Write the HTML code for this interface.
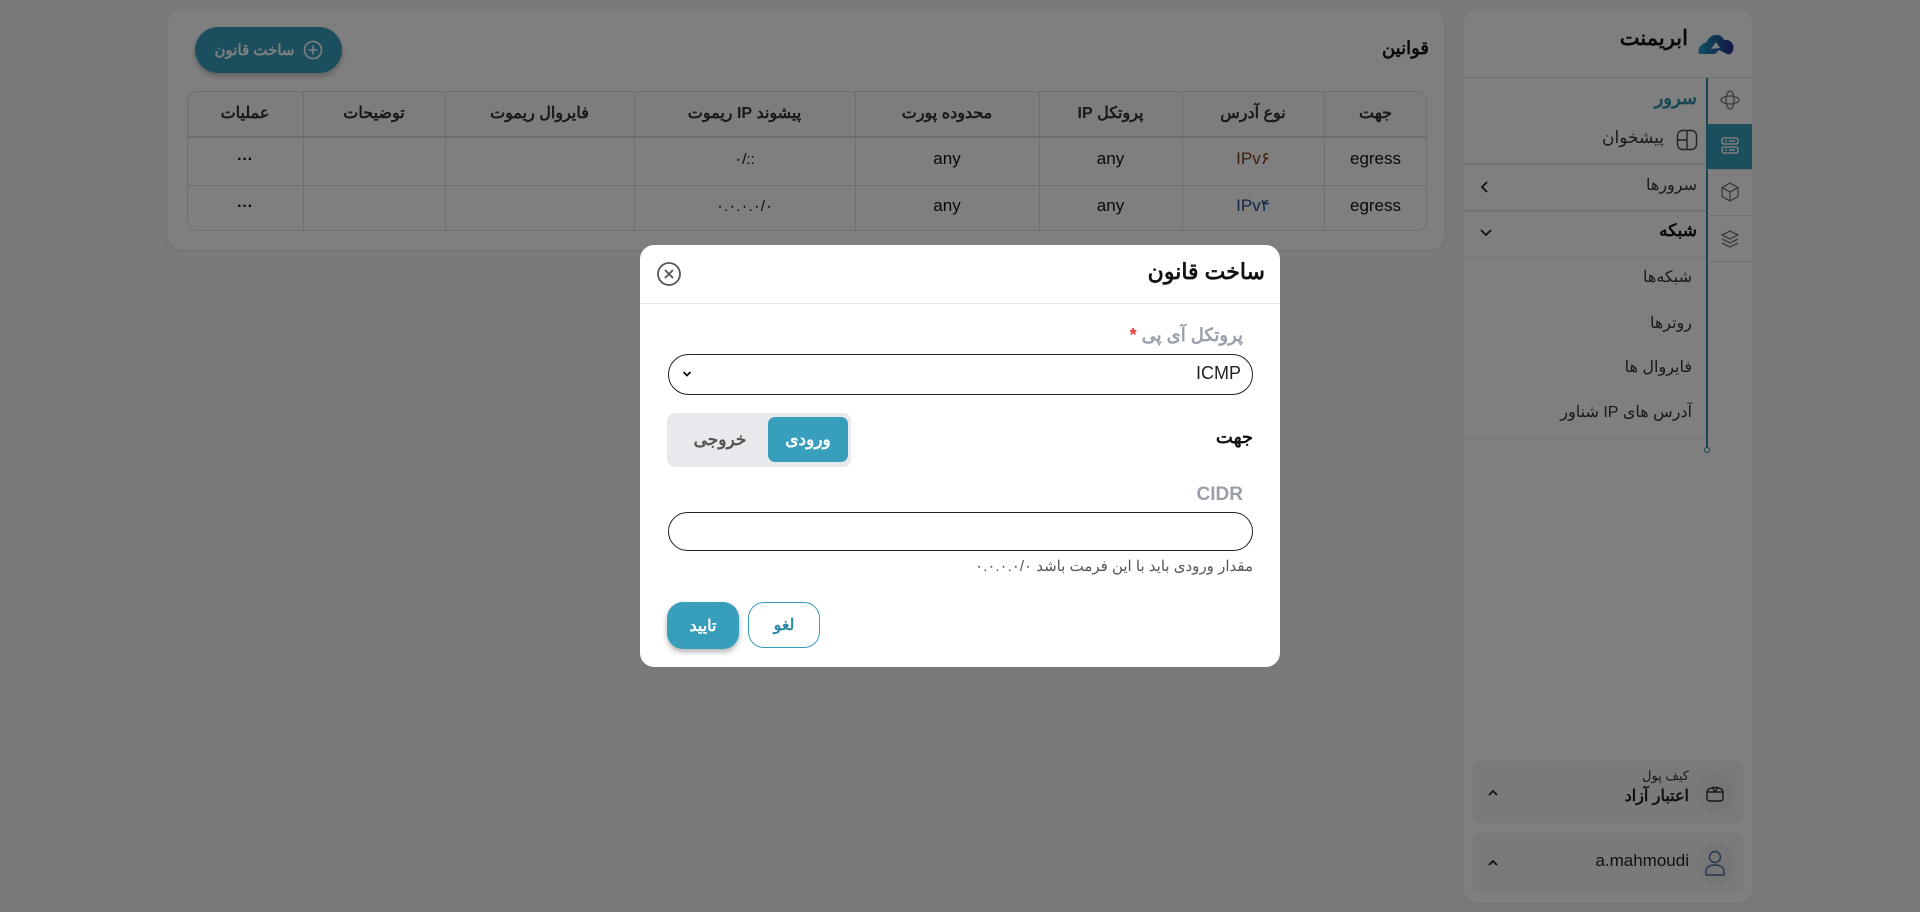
<!DOCTYPE html>
<html><head><meta charset="utf-8">
<style>
*{box-sizing:border-box;margin:0;padding:0}
body{width:1920px;height:912px;position:relative;overflow:hidden;background:#f4f4f4;font-family:"Liberation Sans","Noto Sans CJK SC",sans-serif;color:#111}
.abs{position:absolute}
.rt{direction:rtl;text-align:right;white-space:nowrap}
.card{background:#fff;border-radius:14px;box-shadow:0 1px 4px rgba(0,0,0,.08)}
.ov{position:absolute;left:0;top:0;width:1920px;height:912px;background:rgba(0,0,0,.5)}
.mi{position:absolute;right:223px;font-size:16px;color:#333;direction:rtl;white-space:nowrap}
</style></head><body>

<!-- main card -->
<div class="abs card" style="left:168px;top:9px;width:1276px;height:241px"></div>
<div class="abs rt" style="right:491px;top:38px;font-size:18px;font-weight:bold">قوانین</div>
<div class="abs" style="left:195px;top:27px;width:147px;height:46px;background:#379fbb;border-radius:23px;box-shadow:0 3px 6px rgba(0,0,0,.25);color:#fff;font-size:15px;font-weight:bold;display:flex;align-items:center;justify-content:center;gap:8px;direction:rtl">
<svg width="20" height="20" viewBox="0 0 20 20"><circle cx="10" cy="10" r="8.5" fill="none" stroke="#fff" stroke-width="1.6"/><path d="M10 5.5v9M5.5 10h9" stroke="#fff" stroke-width="1.6"/></svg>ساخت قانون</div>

<div class="abs" style="left:187px;top:91px;width:1240px;height:140px;border:1px solid #ddd;border-radius:10px;overflow:hidden">
 <div class="abs" style="left:0;top:0;width:1240px;height:46px;background:#fafafa;border-bottom:2px solid #ddd"></div>
 <div class="abs" style="left:0;top:93px;width:1240px;height:1px;background:#ddd"></div>
 <div class="abs" style="left:115px;top:0;width:1px;height:140px;background:#ddd"></div>
 <div class="abs" style="left:257px;top:0;width:1px;height:140px;background:#ddd"></div>
 <div class="abs" style="left:446px;top:0;width:1px;height:140px;background:#ddd"></div>
 <div class="abs" style="left:667px;top:0;width:1px;height:140px;background:#ddd"></div>
 <div class="abs" style="left:851px;top:0;width:1px;height:140px;background:#ddd"></div>
 <div class="abs" style="left:994px;top:0;width:1px;height:140px;background:#ddd"></div>
 <div class="abs" style="left:1136px;top:0;width:1px;height:140px;background:#ddd"></div>
</div>
<div style="position:absolute;left:187px;top:91px;width:1240px;height:140px;direction:ltr">
 <div class="abs rt" style="left:0;width:116px;top:12px;text-align:center;font-weight:bold;font-size:16px;color:#333">عملیات</div>
 <div class="abs rt" style="left:116px;width:142px;top:12px;text-align:center;font-weight:bold;font-size:16px;color:#333">توضیحات</div>
 <div class="abs rt" style="left:258px;width:189px;top:12px;text-align:center;font-weight:bold;font-size:16px;color:#333">فایروال ریموت</div>
 <div class="abs rt" style="left:447px;width:221px;top:12px;text-align:center;font-weight:bold;font-size:16px;color:#333">پیشوند IP ریموت</div>
 <div class="abs rt" style="left:668px;width:184px;top:12px;text-align:center;font-weight:bold;font-size:16px;color:#333">محدوده پورت</div>
 <div class="abs rt" style="left:852px;width:143px;top:12px;text-align:center;font-weight:bold;font-size:16px;color:#333">پروتکل IP</div>
 <div class="abs rt" style="left:995px;width:142px;top:12px;text-align:center;font-weight:bold;font-size:16px;color:#333">نوع آدرس</div>
 <div class="abs rt" style="left:1137px;width:103px;top:12px;text-align:center;font-weight:bold;font-size:16px;color:#333">جهت</div>
 <div class="abs" style="left:0;width:116px;top:60px;text-align:center;font-weight:bold">···</div>
 <div class="abs" style="left:447px;width:221px;top:59px;text-align:center;font-size:15px">٠/::</div>
 <div class="abs" style="left:668px;width:184px;top:58px;text-align:center;font-size:17px">any</div>
 <div class="abs" style="left:852px;width:143px;top:58px;text-align:center;font-size:17px">any</div>
 <div class="abs" style="left:995px;width:142px;top:58px;text-align:center;font-size:17px;color:#7a3b1a">IPv۶</div>
 <div class="abs" style="left:1137px;width:103px;top:58px;text-align:center;font-size:17px">egress</div>
 <div class="abs" style="left:0;width:116px;top:107px;text-align:center;font-weight:bold">···</div>
 <div class="abs" style="left:447px;width:221px;top:106px;text-align:center;font-size:15px">٠.٠.٠.٠/٠</div>
 <div class="abs" style="left:668px;width:184px;top:105px;text-align:center;font-size:17px">any</div>
 <div class="abs" style="left:852px;width:143px;top:105px;text-align:center;font-size:17px">any</div>
 <div class="abs" style="left:995px;width:142px;top:105px;text-align:center;font-size:17px;color:#1f4f8a">IPv۴</div>
 <div class="abs" style="left:1137px;width:103px;top:105px;text-align:center;font-size:17px">egress</div>
</div>

<!-- sidebar -->
<div class="abs card" style="left:1464px;top:9px;width:288px;height:894px"></div>
<div class="abs rt" style="right:232px;top:26px;font-size:21px;font-weight:bold">ابریمنت</div>
<svg class="abs" style="left:1697px;top:30px" width="38" height="26" viewBox="0 0 38 26"><defs><linearGradient id="g" x1="0" x2="1"><stop offset="0" stop-color="#1aa0c4"/><stop offset="1" stop-color="#2a2a8a"/></linearGradient></defs><path d="M2 24 C0 17 6 13 10 12 C12 4 24 2 27 10 C33 9 38 14 36 20 C35 24 32 25 30 24 L22 20 L18 24 Z" fill="url(#g)"/><path d="M14 19 L19 12 L23 18 Z" fill="#fff"/></svg>
<div class="abs" style="left:1464px;top:77px;width:288px;height:1px;background:#e3e3e3"></div>
<div class="abs" style="left:1706px;top:78px;width:1.5px;height:372px;background:#2f8aa8"></div>
<div class="abs" style="left:1704px;top:447px;width:6px;height:6px;border:1.5px solid #2f8aa8;border-radius:50%;background:#fff"></div>
<div class="abs" style="left:1707px;top:124px;width:45px;height:45px;background:#379fbb"></div>
<div class="abs" style="left:1707px;top:215px;width:45px;height:47px;border-top:1px solid #e3e3e3;border-bottom:1px solid #e3e3e3"></div>
<div class="abs" style="left:1707px;top:169px;width:45px;height:1px;background:#e3e3e3"></div>
<svg class="abs" style="left:1719px;top:89px" width="22" height="22" viewBox="0 0 22 22" fill="none" stroke="#777" stroke-width="1.3"><ellipse cx="11" cy="11" rx="4" ry="9"/><ellipse cx="11" cy="11" rx="9" ry="4"/></svg>
<svg class="abs" style="left:1719px;top:135px" width="22" height="22" viewBox="0 0 22 22" fill="none" stroke="#fff" stroke-width="1.5"><rect x="3" y="3" width="16" height="6" rx="2"/><rect x="3" y="12" width="16" height="6" rx="2"/><path d="M6 6h2M10 6h6M6 15h2M10 15h6"/></svg>
<svg class="abs" style="left:1719px;top:181px" width="22" height="22" viewBox="0 0 22 22" fill="none" stroke="#777" stroke-width="1.3"><path d="M11 2 L19 6.5 V15.5 L11 20 L3 15.5 V6.5 Z M3 6.5 L11 11 L19 6.5 M11 11 V20"/></svg>
<svg class="abs" style="left:1719px;top:228px" width="22" height="22" viewBox="0 0 22 22" fill="none" stroke="#777" stroke-width="1.3"><path d="M11 3 L19 7 L11 11 L3 7 Z M3 11 L11 15 L19 11 M3 15 L11 19 L19 15"/></svg>
<div class="mi" style="top:88px;font-size:18px;font-weight:bold;color:#2f8aa8">سرور</div>
<div class="mi" style="top:128px;right:256px;font-size:17px">پیشخوان</div>
<svg class="abs" style="left:1676px;top:129px" width="22" height="22" viewBox="0 0 22 22" fill="none" stroke="#444" stroke-width="1.4"><rect x="1.5" y="1.5" width="19" height="19" rx="5"/><path d="M11 1.5V20.5M1.5 11H11"/></svg>
<div class="abs" style="left:1464px;top:163px;width:242px;height:2px;background:#e6e6e6"></div>
<div class="mi" style="top:175px;font-size:16px">سرورها</div>
<svg class="abs" style="left:1479px;top:180px" width="12" height="14" viewBox="0 0 12 14" fill="none" stroke="#222" stroke-width="1.8"><path d="M8 2 L3 7 L8 12"/></svg>
<div class="abs" style="left:1464px;top:210px;width:242px;height:2px;background:#e6e6e6"></div>
<div class="mi" style="top:221px;font-size:17px;font-weight:bold;color:#111">شبکه</div>
<svg class="abs" style="left:1479px;top:228px" width="14" height="10" viewBox="0 0 14 10" fill="none" stroke="#222" stroke-width="1.8"><path d="M2 2 L7 7 L12 2"/></svg>
<div class="abs" style="left:1464px;top:257px;width:242px;height:1px;background:#e6e6e6"></div>
<div class="mi" style="top:267px;right:228px">شبکه‌ها</div>
<div class="mi" style="top:313px;right:228px">روترها</div>
<div class="mi" style="top:357px;right:228px">فایروال ها</div>
<div class="mi" style="top:402px;right:228px">آدرس های IP شناور</div>
<div class="abs" style="left:1464px;top:438px;width:242px;height:1px;background:#e6e6e6"></div>
<div class="abs" style="left:1473px;top:761px;width:270px;height:62px;background:#f4f4f6;border-radius:8px"></div>
<div class="abs" style="left:1696px;top:774px;width:38px;height:38px;border-radius:50%;background:#ececef"></div>
<svg class="abs" style="left:1704px;top:783px" width="22" height="20" viewBox="0 0 22 20" fill="none" stroke="#333" stroke-width="1.4"><path d="M3 9 C3 3 19 3 19 9 V15 C19 17 18 18 16 18 H6 C4 18 3 17 3 15 Z M3 9 H19 M8 4 L11 9 M14 4 L11 9"/></svg>
<div class="abs rt" style="right:231px;top:768px;font-size:13px;color:#333">کیف پول</div>
<div class="abs rt" style="right:231px;top:786px;font-size:16px;font-weight:bold;color:#222">اعتبار آزاد</div>
<svg class="abs" style="left:1487px;top:789px" width="12" height="8" viewBox="0 0 12 8" fill="none" stroke="#222" stroke-width="1.8"><path d="M2 6 L6 2 L10 6"/></svg>
<div class="abs" style="left:1473px;top:833px;width:270px;height:60px;background:#f4f4f6;border-radius:8px"></div>
<div class="abs" style="left:1696px;top:843px;width:38px;height:42px;border-radius:50%;background:#ececef"></div>
<svg class="abs" style="left:1703px;top:849px" width="24" height="28" viewBox="0 0 24 28" fill="none" stroke="#4a6a9a" stroke-width="1.4"><circle cx="12" cy="8" r="5.5"/><path d="M3 26 V23 C3 18 7 16 12 16 C17 16 21 18 21 23 V26 Z"/></svg>
<div class="abs" style="right:231px;top:851px;font-size:17px;color:#222">a.mahmoudi</div>
<svg class="abs" style="left:1487px;top:859px" width="12" height="8" viewBox="0 0 12 8" fill="none" stroke="#222" stroke-width="1.8"><path d="M2 6 L6 2 L10 6"/></svg>

<div class="ov"></div>

<!-- dialog -->
<div class="abs" style="left:640px;top:245px;width:640px;height:422px;background:#fff;border-radius:14px"></div>
<div class="abs rt" style="right:655px;top:259px;font-size:22px;font-weight:bold">ساخت قانون</div>
<svg class="abs" style="left:656px;top:261px" width="26" height="26" viewBox="0 0 26 26" fill="none" stroke="#555" stroke-width="1.8"><circle cx="13" cy="13" r="11"/><path d="M9 9 L17 17 M17 9 L9 17"/></svg>
<div class="abs" style="left:640px;top:303px;width:640px;height:1px;background:#e6e8ec"></div>
<div class="abs rt" style="right:677px;top:325px;font-size:18px;font-weight:bold;color:#9aa0aa">پروتکل آی پی <span style="color:#e53935">*</span></div>
<div class="abs" style="left:668px;top:354px;width:585px;height:41px;border:1.5px solid #222;border-radius:21px"></div>
<div class="abs" style="right:679px;top:363px;font-size:18px;color:#222">ICMP</div>
<svg class="abs" style="left:682px;top:370px" width="10" height="8" viewBox="0 0 10 8" fill="none" stroke="#111" stroke-width="1.8"><path d="M1.5 2 L5 5.5 L8.5 2"/></svg>
<div class="abs rt" style="right:667px;top:427px;font-size:18px;font-weight:bold">جهت</div>
<div class="abs" style="left:667px;top:413px;width:184px;height:54px;background:#e8e9ec;border-radius:8px"></div>
<div class="abs" style="left:768px;top:417px;width:80px;height:45px;background:#379fbb;border-radius:7px;color:#fff;font-size:17px;font-weight:bold;display:flex;align-items:center;justify-content:center">ورودی</div>
<div class="abs" style="left:680px;top:417px;width:80px;height:45px;color:#555;font-size:17px;font-weight:bold;display:flex;align-items:center;justify-content:center">خروجی</div>
<div class="abs" style="right:677px;top:484px;font-size:19px;font-weight:bold;color:#9aa0aa">CIDR</div>
<div class="abs" style="left:668px;top:512px;width:585px;height:39px;border:1.5px solid #222;border-radius:20px"></div>
<div class="abs rt" style="right:667px;top:557px;font-size:15px;color:#555">مقدار ورودی باید با این فرمت باشد ٠.٠.٠.٠/٠</div>
<div class="abs" style="left:667px;top:602px;width:72px;height:47px;background:#379fbb;border-radius:16px;box-shadow:0 3px 6px rgba(0,0,0,.3);color:#fff;font-size:16px;font-weight:bold;display:flex;align-items:center;justify-content:center">تایید</div>
<div class="abs" style="left:748px;top:602px;width:72px;height:46px;border:1px solid #379fbb;border-radius:16px;color:#2f8aa8;font-size:16px;font-weight:bold;display:flex;align-items:center;justify-content:center">لغو</div>
</body></html>
